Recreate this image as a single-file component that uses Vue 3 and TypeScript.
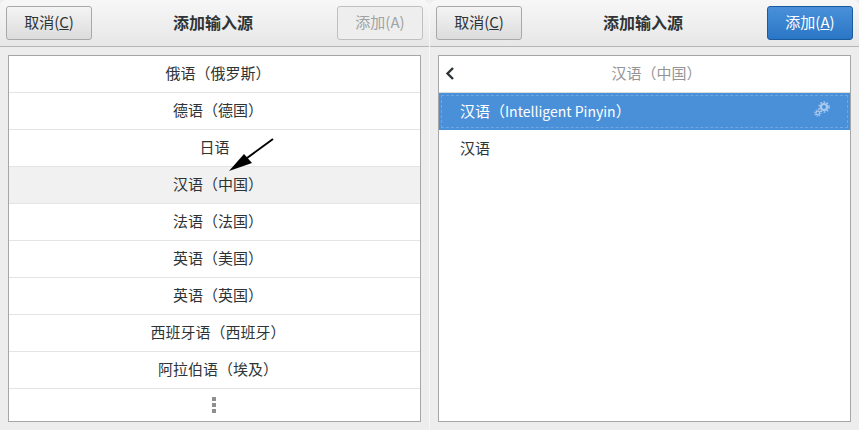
<script setup lang="ts">
const languages: string[] = [
  '俄语（俄罗斯）',
  '德语（德国）',
  '日语',
  '汉语（中国）',
  '法语（法国）',
  '英语（美国）',
  '英语（英国）',
  '西班牙语（西班牙）',
  '阿拉伯语（埃及）',
]
const activeIndex = 3
</script>

<template>
  <div class="page">
    <section class="dialog">
      <header class="titlebar">
        <button class="btn"><span>取消(<u>C</u>)</span></button>
        <h1 class="title">添加输入源</h1>
        <button class="btn disabled"><span>添加(A)</span></button>
      </header>
      <div class="body">
        <div class="list">
          <div
            v-for="(lang, i) in languages"
            :key="lang"
            class="row center"
            :class="{ hover: i === activeIndex, paren: lang.includes('（') }"
          >{{ lang }}</div>
          <div class="more">
            <i></i><i></i><i></i>
          </div>
          <svg class="arrow" width="54" height="36" viewBox="0 0 54 36">
            <path d="M52 1 L26 20" stroke="#000" stroke-width="2" fill="none" />
            <path d="M8 33 L23 16 L31 25 Z" fill="#000" />
          </svg>
        </div>
      </div>
    </section>
    <section class="dialog">
      <header class="titlebar">
        <button class="btn"><span>取消(<u>C</u>)</span></button>
        <h1 class="title">添加输入源</h1>
        <button class="btn primary"><span>添加(<u>A</u>)</span></button>
      </header>
      <div class="body">
        <div class="list">
          <div class="row center sub">
            <svg class="back" width="10" height="14" viewBox="0 0 10 14">
              <path d="M8 1 L2.5 6.5 L8 12" stroke="#2e3436" stroke-width="2.4" fill="none" />
            </svg>
            汉语（中国）
          </div>
          <div class="row left selected">
            <span>汉语（<span class="latin">Intelligent Pinyin</span>）</span>
            <svg class="gears" width="16" height="16" viewBox="0 0 16 16">
              <g fill="none" stroke="#a9c9ee">
                <circle cx="10" cy="6" r="3" stroke-width="2.2" />
                <circle cx="10" cy="6" r="5" stroke-width="1.6" stroke-dasharray="1.6 1.6" />
                <circle cx="3.8" cy="12" r="1.8" stroke-width="1.3" />
                <circle cx="3.8" cy="12" r="3.1" stroke-width="1.1" stroke-dasharray="1.2 1.2" />
              </g>
            </svg>
          </div>
          <div class="row left plain">汉语</div>
        </div>
      </div>
    </section>
  </div>
</template>

<style>
html, body { margin: 0; background: #ededed; }
</style>

<style scoped>
.page {
  width: 859px;
  height: 430px;
  display: flex;
  gap: 1px;
  background: #f6f6f6;
  overflow: hidden;
  font-family: "Noto Sans CJK SC", "Noto Sans", sans-serif;
  font-size: 15px;
  color: #2e3436;
}
.dialog {
  width: 429px;
  flex: none;
  display: flex;
  flex-direction: column;
  background: #ededed;
}
.titlebar {
  height: 47px;
  flex: none;
  box-sizing: border-box;
  display: flex;
  align-items: center;
  justify-content: space-between;
  padding: 0 6px;
  border-bottom: 1px solid #b6b6b3;
  border-radius: 6px 6px 0 0;
  background: linear-gradient(#f7f7f7, #e7e7e7);
}
.title {
  margin: 0 3px 2px 0;
  font-size: 16px;
  font-weight: 700;
  color: #2e3436;
}
.btn {
  width: 86px;
  height: 34px;
  box-sizing: border-box;
  border: 1px solid #a8a8a8;
  border-radius: 3px;
  background: linear-gradient(#f4f4f4, #dcdcdc);
  color: #2e3436;
  font: inherit;
  padding: 0 0 3px;
}
.disabled {
  border-color: #c0c0c0;
  background: #eeeeee;
  color: #a0a3a3;
}
.primary {
  border-color: #1b5a9c;
  background: linear-gradient(#4a90d9, #2a76c6);
  color: #fff;
}
.body {
  flex: 1;
  padding: 8px;
  min-height: 0;
  display: flex;
}
.list {
  position: relative;
  flex: 1;
  box-sizing: border-box;
  height: 367px;
  border: 1px solid #a6a6a6;
  background: #fff;
}
.row {
  height: 37px;
  box-sizing: border-box;
  padding-bottom: 2px;
  display: flex;
  align-items: center;
  border-bottom: 1px solid #e4e4e4;
}
.center { justify-content: center; padding-bottom: 4px; }
.paren { padding-left: 7px; }
.hover { background: #f1f1f1; }
.sub {
  position: relative;
  padding-left: 24px;
  color: #959595;
  border-bottom-color: #dcdcdc;
}
.back { position: absolute; left: 6px; top: 11px; }
.left { padding-left: 21px; padding-right: 21px; justify-content: space-between; }
.plain { border-bottom: none; }
.latin {
  font-size: 14px;
}
.selected {
  background: #4a90d9;
  color: #fff;
  border-bottom: none;
  outline: 1px dashed #6ea6e2;
  outline-offset: -3px;
}
.gears { margin-right: -1px; margin-top: -4px; }
.more {
  height: 32px;
  padding-right: 1px;
  display: flex;
  flex-direction: column;
  align-items: center;
  justify-content: center;
  gap: 2px;
}
.more i {
  display: block;
  width: 4px;
  height: 4px;
  background: #8f8f8f;
}
.arrow {
  position: absolute;
  left: 212px;
  top: 82px;
}
</style>
